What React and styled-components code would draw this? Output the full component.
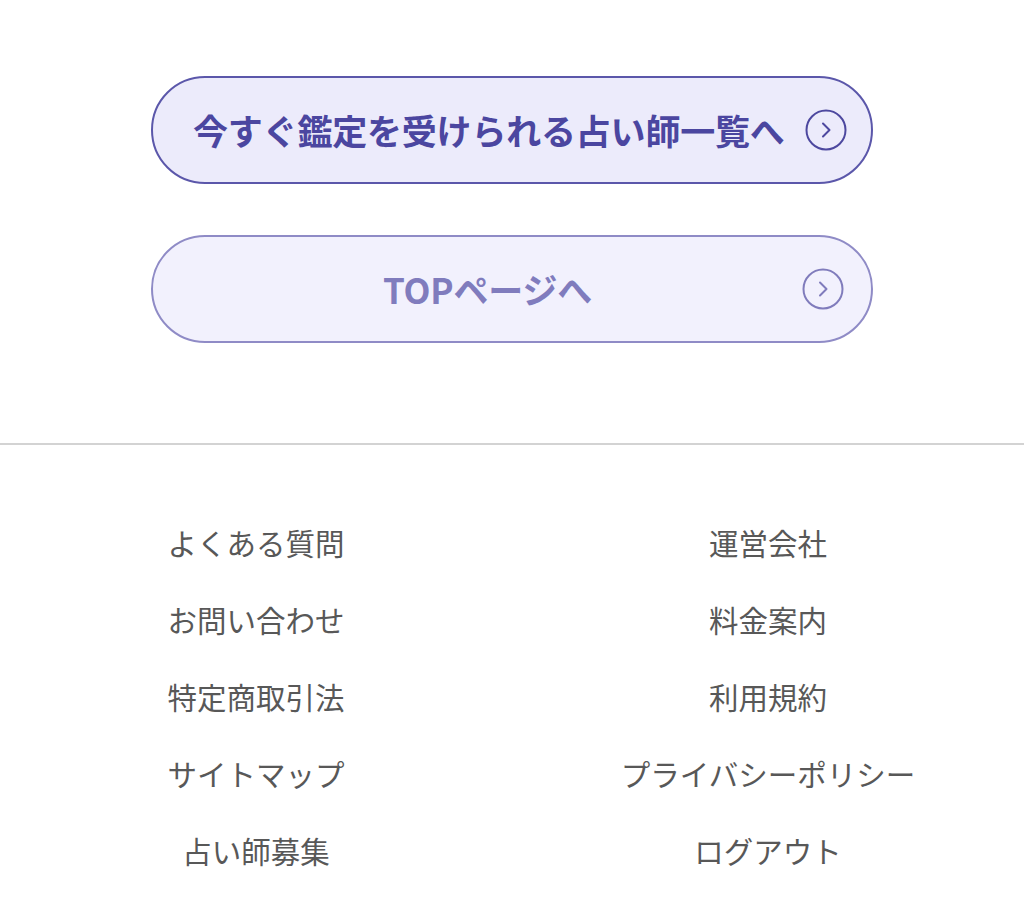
import React from 'react';
import styled, { createGlobalStyle } from 'styled-components';

const GlobalStyle = createGlobalStyle`
  html, body {
    margin: 0;
    padding: 0;
    background: #ffffff;
  }
  body {
    font-family: "Noto Sans CJK JP", "Noto Sans", sans-serif;
  }
`;

const LINKS = [
  ['よくある質問', '運営会社'],
  ['お問い合わせ', '料金案内'],
  ['特定商取引法', '利用規約'],
  ['サイトマップ', 'プライバシーポリシー'],
  ['占い師募集', 'ログアウト'],
];

const ArrowCircle = ({ color }) => (
  <svg width="42" height="42" viewBox="0 0 42 42" fill="none">
    <circle cx="21" cy="21" r="19.5" stroke={color} strokeWidth="2" />
    <path d="M18 14.5 L24.5 21 L18 27.5" stroke={color} strokeWidth="2" strokeLinecap="round" strokeLinejoin="round" />
  </svg>
);

const App = () => {
  return (
    <Page>
      <GlobalStyle />
      <Buttons>
        <PillButton $variant="primary" href="#">
          <Label>今すぐ鑑定を受けられる占い師一覧へ</Label>
          <ArrowCircle color="#4d489f" />
        </PillButton>
        <PillButton $variant="secondary" href="#">
          <Label>TOPページへ</Label>
          <ArrowCircle color="#807cbc" />
        </PillButton>
      </Buttons>
      <Divider />
      <FooterNav>
        {LINKS.map(([left, right]) => (
          <React.Fragment key={left}>
            <FooterLink href="#">{left}</FooterLink>
            <FooterLink href="#">{right}</FooterLink>
          </React.Fragment>
        ))}
      </FooterNav>
    </Page>
  );
};

export default App;

const Page = styled.div`
  width: 1024px;
  min-height: 908px;
  background: #ffffff;
`;

const Buttons = styled.div`
  display: flex;
  flex-direction: column;
  align-items: center;
  gap: 51px;
  padding: 76px 0 100px;
`;

const PillButton = styled.a`
  box-sizing: border-box;
  width: 722px;
  height: 108px;
  display: grid;
  grid-template-columns: 1fr 42px;
  align-items: center;
  column-gap: 20px;
  padding: 0 27px 0 40px;
  border-radius: 54px;
  text-decoration: none;
  border: 2px solid ${p => (p.$variant === 'primary' ? '#5b57aa' : '#8f8bc6')};
  background: ${p => (p.$variant === 'primary' ? '#ecebfb' : '#f2f1fd')};
  color: ${p => (p.$variant === 'primary' ? '#4b46a0' : '#807cbd')};
`;

const Label = styled.span`
  text-align: center;
  font-size: 35px;
  font-weight: 700;
  line-height: 1;
  letter-spacing: -0.2px;
  white-space: nowrap;
  margin-top: -2px;
`;

const Divider = styled.hr`
  margin: 0;
  border: 0;
  height: 2px;
  background: #d3d3d3;
`;

const FooterNav = styled.nav`
  display: grid;
  grid-template-columns: 1fr 1fr;
  grid-auto-rows: 77px;
  padding-top: 58px;
`;

const FooterLink = styled.a`
  display: flex;
  align-items: center;
  justify-content: center;
  font-size: 29.5px;
  color: #585858;
  text-decoration: none;
  white-space: nowrap;
`;
